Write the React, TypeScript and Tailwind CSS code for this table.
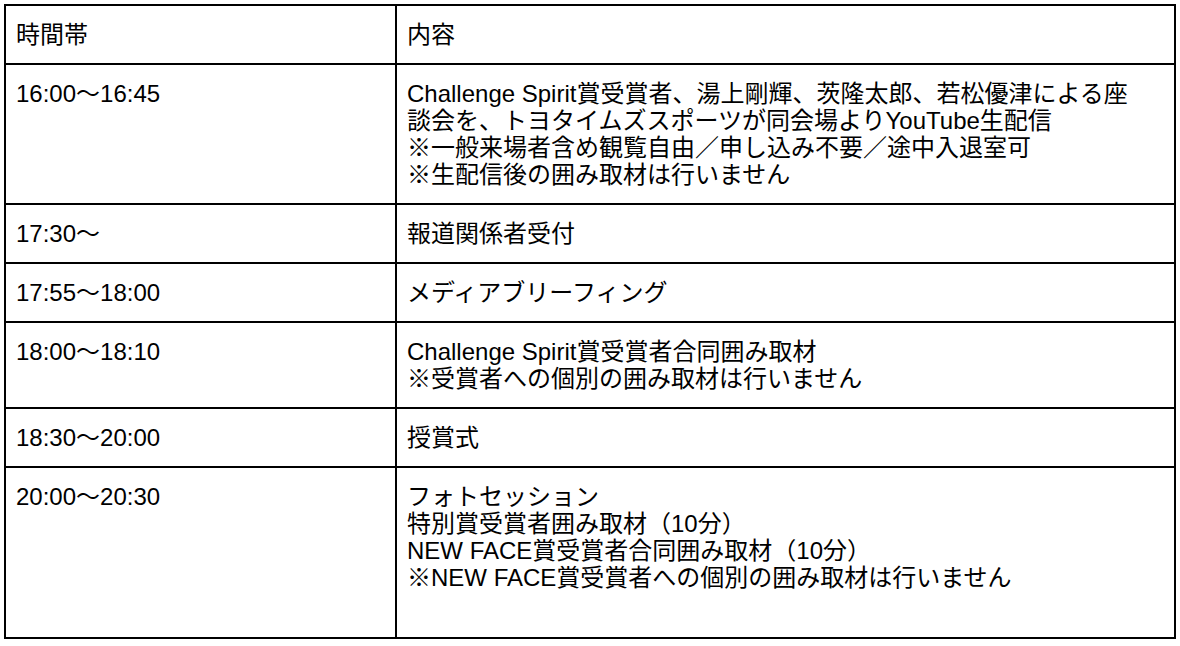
export default function App() {
  const rows: { t: string; c: string[] }[] = [
    {
      t: "16:00～16:45",
      c: [
        "Challenge Spirit賞受賞者、湯上剛輝、茨隆太郎、若松優津による座",
        "談会を、トヨタイムズスポーツが同会場よりYouTube生配信",
        "※一般来場者含め観覧自由／申し込み不要／途中入退室可",
        "※生配信後の囲み取材は行いません",
      ],
    },
    { t: "17:30～", c: ["報道関係者受付"] },
    { t: "17:55～18:00", c: ["メディアブリーフィング"] },
    {
      t: "18:00～18:10",
      c: ["Challenge Spirit賞受賞者合同囲み取材", "※受賞者への個別の囲み取材は行いません"],
    },
    { t: "18:30～20:00", c: ["授賞式"] },
    {
      t: "20:00～20:30",
      c: [
        "フォトセッション",
        "特別賞受賞者囲み取材（10分）",
        "NEW FACE賞受賞者合同囲み取材（10分）",
        "※NEW FACE賞受賞者への個別の囲み取材は行いません",
      ],
    },
  ];
  return (
    <div className="bg-white w-[1180px] h-[646px] p-[4px] text-black text-[24px] leading-[27px] [font-family:'Liberation_Sans','Noto_Sans_CJK_JP',sans-serif]">
      <table className="w-[1172px] border-collapse table-fixed">
        <colgroup>
          <col className="w-[391px]" />
          <col />
        </colgroup>
        <tbody>
          <tr>
            <td className="border-2 border-black px-[10px] py-[15px] align-top">時間帯</td>
            <td className="border-2 border-black px-[10px] py-[15px] align-top">内容</td>
          </tr>
          {rows.map((r, ri) => (
            <tr key={r.t}>
              <td className="border-2 border-black px-[10px] py-[15px] align-top">{r.t}</td>
              <td
                className={
                  ri === rows.length - 1
                    ? "border-2 border-black px-[10px] pt-[15px] pb-[46px] align-top"
                    : "border-2 border-black px-[10px] py-[15px] align-top"
                }
              >
                {r.c.map((l, i) => (
                  <div key={i} className="whitespace-nowrap">{l}</div>
                ))}
              </td>
            </tr>
          ))}
        </tbody>
      </table>
    </div>
  );
}
